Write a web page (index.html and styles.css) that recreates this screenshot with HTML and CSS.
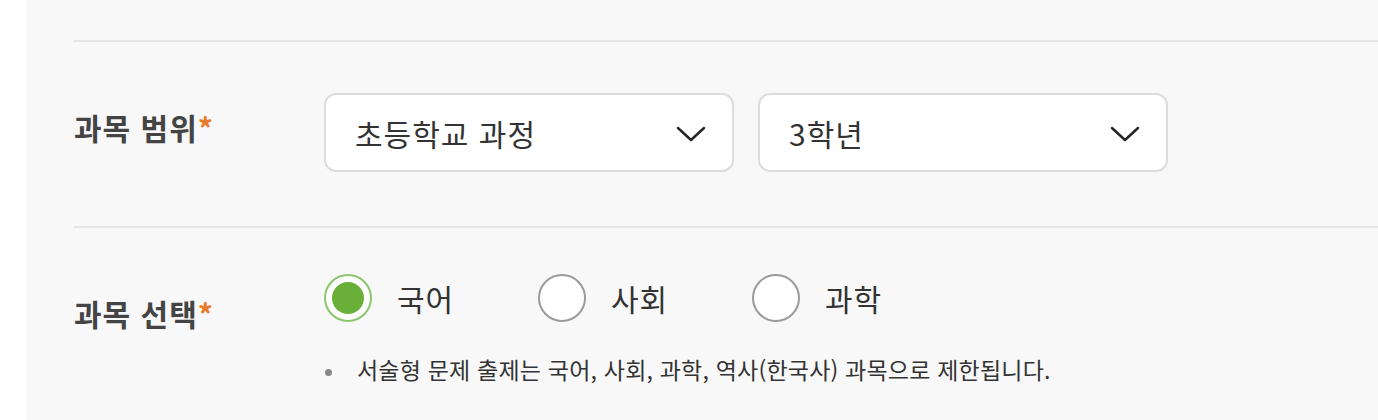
FILE: index.html
```html
<!DOCTYPE html>
<html lang="ko">
<head>
<meta charset="utf-8">
<link rel="stylesheet" href="styles.css">
</head>
<body>
<div class="panel">
  <div class="top-space"></div>
  <div class="row row-range">
    <div class="label">과목 범위<span class="req">*</span></div>
    <div class="field selects">
      <div class="select">
        <span class="select-text">초등학교 과정</span>
        <svg class="chev" width="30" height="18" viewBox="0 0 30 18"><path d="M2 3 L15 15 L28 3" fill="none" stroke="#222" stroke-width="2.4" stroke-linecap="round" stroke-linejoin="round"/></svg>
      </div>
      <div class="select">
        <span class="select-text">3학년</span>
        <svg class="chev" width="30" height="18" viewBox="0 0 30 18"><path d="M2 3 L15 15 L28 3" fill="none" stroke="#222" stroke-width="2.4" stroke-linecap="round" stroke-linejoin="round"/></svg>
      </div>
    </div>
  </div>
  <div class="row row-subject">
    <div class="label">과목 선택<span class="req">*</span></div>
    <div class="field">
      <div class="radios">
        <label class="radio"><span class="circle checked"><span class="dot"></span></span><span class="radio-text">국어</span></label>
        <label class="radio"><span class="circle"></span><span class="radio-text">사회</span></label>
        <label class="radio"><span class="circle"></span><span class="radio-text">과학</span></label>
      </div>
      <ul class="notes">
        <li>서술형 문제 출제는 국어, 사회, 과학, 역사(한국사) 과목으로 제한됩니다.</li>
      </ul>
    </div>
  </div>
</div>
</body>
</html>
```

FILE: styles.css
```css
html, body {
  margin: 0;
  padding: 0;
  background: #ffffff;
  height: 100%;
}
body {
  font-family: "Noto Sans CJK KR", "Noto Sans", sans-serif;
  color: #333;
  overflow: hidden;
}
.panel {
  margin-left: 26px;
  background: #f8f8f8;
  padding-left: 48px;
  height: 420px;
}
.top-space {
  height: 40px;
}
.row {
  display: flex;
  border-top: 2px solid #e6e6e6;
}
.row-range {
  padding: 51px 0 55px;
  height: 78px;
}
.row-subject {
  padding-top: 46px;
}
.label {
  width: 250px;
  flex-shrink: 0;
  font-size: 30px;
  font-weight: 700;
  color: #444;
  line-height: 40px;
  letter-spacing: 1px;
}
.row-range .label { padding-top: 14px; }
.row-subject .label { padding-top: 19px; }
.req {
  color: #e87b2c;
}
.selects {
  display: flex;
  gap: 24px;
}
.select {
  box-sizing: border-box;
  width: 410px;
  height: 79px;
  background: #fff;
  border: 2px solid #dcdcdc;
  border-radius: 12px;
  display: flex;
  align-items: center;
  justify-content: space-between;
  padding: 0 26px 0 29px;
}
.select-text {
  font-size: 30px;
  color: #333;
  line-height: 40px;
  letter-spacing: 1px;
}
.chev {
  display: block;
  margin-top: 2px;
}
.radios {
  display: flex;
}
.radio {
  display: flex;
  align-items: center;
  gap: 25px;
  width: 214px;
}
.circle {
  box-sizing: border-box;
  width: 48px;
  height: 48px;
  border-radius: 50%;
  border: 2px solid #9a9a9a;
  background: #fff;
  display: flex;
  align-items: center;
  justify-content: center;
}
.circle.checked {
  border-color: #8cc66b;
}
.dot {
  width: 32px;
  height: 32px;
  border-radius: 50%;
  background: #6aaf38;
}
.radio-text {
  font-size: 30px;
  color: #333;
  line-height: 40px;
  letter-spacing: 1px;
}
.notes {
  list-style: none;
  margin: 32px 0 0;
  padding: 0;
}
.notes li {
  position: relative;
  padding-left: 33px;
  font-size: 23px;
  color: #333;
  line-height: 30px;
  letter-spacing: 0.2px;
}
.notes li::before {
  content: "";
  position: absolute;
  left: 1px;
  top: 15px;
  width: 7px;
  height: 7px;
  border-radius: 50%;
  background: #888;
}
```
